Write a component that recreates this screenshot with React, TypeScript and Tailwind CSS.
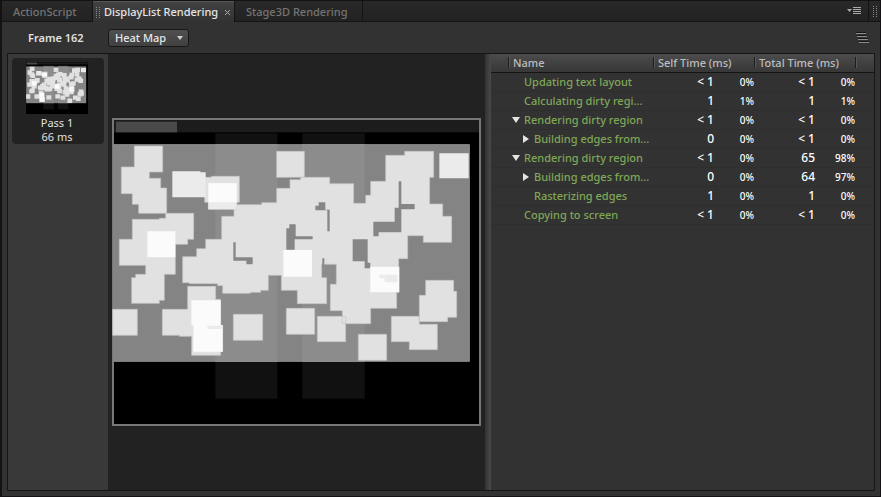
import React, { useState } from "react";

const BANDS = [
  { x: 316, width: 186 },
  { x: 577, width: 187 },
];

// Areas that were redrawn once, as outlines on the stage's own grid.
const DRAWN = [
  "M73 93H158V171H118V190H152V219H170V295H86V268H67V236H34V156H73Z",
  "M67 313H148V310H167V295H251V373H233V388H196V478H163V556H148V565H65V488H77V478H107V451H28V373H67Z",
  "M304 184H388V262H380V283H295V262H284V187H304Z",
  "M500 109H583V187H500Z",
  "M372 269H455V263H500V220H540V194H572V187H659V206H731V265H767V241H782V199H827V121H884V109H971V187H959V267H998V304H1025V382H940V362H893V431H866V532H860V580H782V626H697V587H661V508H679V448H635V488H650V566H562V526H514V481H475V526H452V532H421V535H338V512H323V506H238V503H218V425H260V401H287V373H335V304H372Z",
  "M8 583H82V661H8Z",
  "M233 514H317V553H332V631H338V710H332V721H245V664H208V661H157V583H233Z",
  "M370 598H458V676H370Z",
  "M529 580H614V658H529Z",
  "M622 604H707V680H622Z",
  "M745 658H830V736H745Z",
  "M844 604H928V628H982V704H898V680H844Z",
  "M947 496H1031V529H1040V607H1013V620H928V541H947Z",
];

// Gaps left between overlapping squares.
const GAPS = [
  "M370 382H377V427H428V448H409V437H370Z",
  "M538 328H557V364H608V373H554V404H529V340H538Z",
  "M626 262H646V284H659V349H652V286H616V272H626Z",
  "M728 373H773V443H781V460H764V439H728Z",
  "M866 199H874V267H914V283H874V352H806V364H790V320H854V278H866Z",
  "M637 430H643V450H637Z",
];

const WARM = [
  "M187 169H271V172H287V247H187Z",
  "M295 205H380V283H295Z",
  "M988 115H1076V190H988Z",
];

const HOT = [
  "M295 205H380V262H295Z",
  "M112 349H196V427H112Z",
  "M520 405H606V485H520Z",
  "M781 455H868V532H781Z",
  "M244 556H332V631H338V710H250V631H244Z",
];

const COOLER = ["M808 479H862V502H824V490H808Z", "M292 632H334V642H292Z"];

function HeatMap({ className, framed = false }: { className: string; framed?: boolean }) {
  return (
    <svg
      className={className}
      viewBox="0 0 1107 924"
      preserveAspectRatio="none"
      role="img"
      aria-label="Heat map"
    >
      <rect width="1107" height="924" fill="#000" />
      {framed && (
        <rect x="3" y="3" width="1101" height="918" fill="none" stroke="#777" strokeWidth="6" />
      )}
      <g transform="translate(-6 -9)">
        <rect x="12" y="15" width="1095" height="37" fill="#1c1c1c" />
        <rect x="18" y="20" width="183" height="32" fill="#4a4a4a" />
        {BANDS.map((b) => (
          <rect key={b.x} x={b.x} y="55" width={b.width} height="796" fill="#111" />
        ))}
        <rect x="9" y="88" width="1070" height="652" fill="#848484" />
        {BANDS.map((b) => (
          <rect key={b.x} x={b.x} y="88" width={b.width} height="652" fill="#8c8c8c" />
        ))}
        <path d="M10 89H1078V739H10" fill="none" stroke="#9c9c9c" strokeWidth="2" />
        <path d={DRAWN.join("")} fill="#e1e1e1" stroke="#c4c4c4" strokeWidth="2" />
        <path d={GAPS.join("")} fill="#868686" />
        <path d={WARM.join("")} fill="#ebebeb" />
        <path d={HOT.join("")} fill="#fbfbfb" />
        <path d={COOLER.join("")} fill="#ebebeb" />
      </g>
    </svg>
  );
}

type Row = {
  name: string;
  level: number;
  arrow?: "open" | "closed";
  self: string;
  selfPct: string;
  total: string;
  totalPct: string;
};

const ROWS: Row[] = [
  { name: "Updating text layout", level: 0, self: "< 1", selfPct: "0%", total: "< 1", totalPct: "0%" },
  { name: "Calculating dirty regi...", level: 0, self: "1", selfPct: "1%", total: "1", totalPct: "1%" },
  { name: "Rendering dirty region", level: 0, arrow: "open", self: "< 1", selfPct: "0%", total: "< 1", totalPct: "0%" },
  { name: "Building edges from...", level: 1, arrow: "closed", self: "0", selfPct: "0%", total: "< 1", totalPct: "0%" },
  { name: "Rendering dirty region", level: 0, arrow: "open", self: "< 1", selfPct: "0%", total: "65", totalPct: "98%" },
  { name: "Building edges from...", level: 1, arrow: "closed", self: "0", selfPct: "0%", total: "64", totalPct: "97%" },
  { name: "Rasterizing edges", level: 1, self: "1", selfPct: "0%", total: "1", totalPct: "0%" },
  { name: "Copying to screen", level: 0, self: "< 1", selfPct: "0%", total: "< 1", totalPct: "0%" },
];

function Arrow({ state }: { state: "open" | "closed" }) {
  return (
    <svg className="block h-2 w-2" viewBox="0 0 8 8" aria-hidden="true">
      <path d={state === "open" ? "M0 1H8L4 7Z" : "M1 0V8L7 4Z"} fill="#e4e4e4" />
    </svg>
  );
}

function Grip() {
  return (
    <svg className="h-[11px] w-1 shrink-0" viewBox="0 0 4 11" shapeRendering="crispEdges" aria-hidden="true">
      {[0, 2, 4, 6, 8, 10].map((y) => (
        <path key={y} d={`M0 ${y}h1v1h-1zM3 ${y}h1v1h-1z`} fill="#8a8a8a" />
      ))}
    </svg>
  );
}

function TimeCells({ time, pct }: { time: string; pct: string }) {
  return (
    <>
      <td className="p-0 pb-[2px] text-right text-[12px] font-medium text-white">{time}</td>
      <td className="p-0 pb-[2px] text-right text-[10px] font-medium text-white">{pct}</td>
    </>
  );
}

function Heading({ text }: { text: string }) {
  return (
    <div className="flex items-center">
      <span className="h-[11px] w-[2px] shrink-0 border-r border-l border-r-[#585858] border-l-[#1c1c1c]" />
      <span className="pl-[3px] whitespace-nowrap">{text}</span>
    </div>
  );
}

const HEAD = "border-b border-[#151515] p-0 pb-px text-left font-medium";

export default function App() {
  const [view, setView] = useState("Heat Map");
  return (
    <div className="flex h-screen flex-col border border-l-2 border-[#141214] bg-[#323232] font-['Noto_Sans','Open_Sans',sans-serif] text-[11px] leading-[14px] text-[#e0e0e0]">
      <div role="tablist" className="flex h-[21px] shrink-0 bg-linear-to-b from-[#292929] to-[#222]">
        <button role="tab" aria-selected="false" className="w-[91px] border-r border-b border-[#141414] pt-px pl-[11px] text-left font-medium text-[#747474]">
          ActionScript
        </button>
        <div className="flex w-[141px] items-center border-t border-[#555] bg-linear-to-b from-[#424242] to-[#323232] pl-[3px]">
          <Grip />
          <button role="tab" aria-selected="true" className="ml-1 flex-1 text-left font-medium whitespace-nowrap text-[#e6e6e6]">
            DisplayList Rendering
          </button>
          <button aria-label="Close tab" className="mr-1">
            <svg className="block h-[5px] w-[5px]" viewBox="0 0 5 5" aria-hidden="true">
              <path d="M0 0L5 5M5 0L0 5" stroke="#aaa" />
            </svg>
          </button>
        </div>
        <button role="tab" aria-selected="false" className="w-[129px] border-r border-b border-l border-[#141414] pt-px pl-[11px] text-left font-medium whitespace-nowrap text-[#747474]">
          Stage3D Rendering
        </button>
        <div className="flex flex-1 items-center justify-end border-b border-[#141414] pr-[7px]">
          <button aria-label="Panel menu">
            <svg className="block h-2 w-[14px]" viewBox="0 0 14 8" aria-hidden="true">
              <path d="M0 2H5L2.5 5Z" fill="#aaa" />
              <path d="M6 .5H14M6 2.5H14M6 4.5H14M6 6.5H14" stroke="#aaa" />
            </svg>
          </button>
        </div>
        <div className="flex w-[12px] items-center justify-center border-b border-l border-[#141414]">
          <Grip />
        </div>
      </div>

      <div className="flex h-[31px] shrink-0 items-center pr-[11px] pl-[26px]">
        <label htmlFor="view" className="w-20 text-[11px] font-semibold">
          Frame 162
        </label>
        <div className="relative">
          <select
            id="view"
            value={view}
            onChange={(e) => setView(e.target.value)}
            className="block h-[18px] w-[81px] appearance-none rounded-[3px] border border-[#181818] bg-linear-to-b from-[#505050] to-[#404040] pl-[6px] font-medium text-[#e6e6e6]"
          >
            <option>Heat Map</option>
          </select>
          <svg className="pointer-events-none absolute top-[7px] right-[6px] h-1 w-[6px]" viewBox="0 0 6 4" aria-hidden="true">
            <path d="M0 0H6L3 4Z" fill="#ccc" />
          </svg>
        </div>
        <svg className="ml-auto h-[11px] w-[13px]" viewBox="0 0 13 11" aria-hidden="true">
          <path d="M0 1.5H10M1 4.5H11M2 7.5H12M3 10.5H13" stroke="#8c8c8c" />
          <path d="M0 .5H10M1 3.5H11M2 6.5H12M3 9.5H13" stroke="#181818" />
        </svg>
      </div>

      <div className="mr-[5px] mb-[5px] ml-[5px] flex min-h-0 flex-1 border border-[#151515]">
        <aside className="w-[100px] shrink-0 bg-[#393939] p-1">
          <button className="flex w-full flex-col items-center rounded-[4px] bg-[#222] pt-1 pr-[2px] text-[11px] leading-[14px] text-[#e0e0e0]">
            <HeatMap className="mb-[2px] block h-[52px] w-[62px]" />
            <span>Pass 1</span>
            <span>66 ms</span>
          </button>
        </aside>

        <main className="flex min-w-0 flex-1 items-center bg-[#222] pr-1 pl-1">
          <HeatMap framed className="block h-auto w-full" />
        </main>

        <div className="w-[6px] shrink-0 bg-linear-to-r from-[#333] to-[#4a4a4a]" />

        <section className="w-[383px] shrink-0">
          <table className="w-full table-fixed border-separate border-spacing-0">
            <colgroup>
              <col className="w-[17px]" />
              <col className="w-[145px]" />
              <col className="w-[61px]" />
              <col className="w-[40px]" />
              <col className="w-[61px]" />
              <col className="w-[40px]" />
              <col />
            </colgroup>
            <thead>
              <tr className="h-[19px] bg-linear-to-b from-[#4c4c4c] to-[#363636] text-[#bcbcbc]">
                <td className={HEAD} />
                <th className={HEAD}><Heading text="Name" /></th>
                <th colSpan={2} className={HEAD}><Heading text="Self Time (ms)" /></th>
                <th colSpan={2} className={HEAD}><Heading text="Total Time (ms)" /></th>
                <td className={HEAD}><Heading text="" /></td>
              </tr>
            </thead>
            <tbody>
              {ROWS.map((r, i) => (
                <tr key={i} className="h-[19px] shadow-[inset_0_-1px_#2e2e2e]">
                  <td className="p-0" />
                  <td className={r.level ? "p-0 pb-[2px] pl-[14px]" : "p-0 pb-[2px] pl-1"}>
                    <div className="flex items-center font-medium whitespace-nowrap text-[#7fa757]">
                      <span className="w-3 shrink-0">
                        {r.arrow && (
                          <button aria-label={`Toggle ${r.name}`} aria-expanded={r.arrow === "open"} className="block">
                            <Arrow state={r.arrow} />
                          </button>
                        )}
                      </span>
                      {r.name}
                    </div>
                  </td>
                  <TimeCells time={r.self} pct={r.selfPct} />
                  <TimeCells time={r.total} pct={r.totalPct} />
                  <td className="p-0" />
                </tr>
              ))}
            </tbody>
          </table>
        </section>
      </div>
    </div>
  );
}
